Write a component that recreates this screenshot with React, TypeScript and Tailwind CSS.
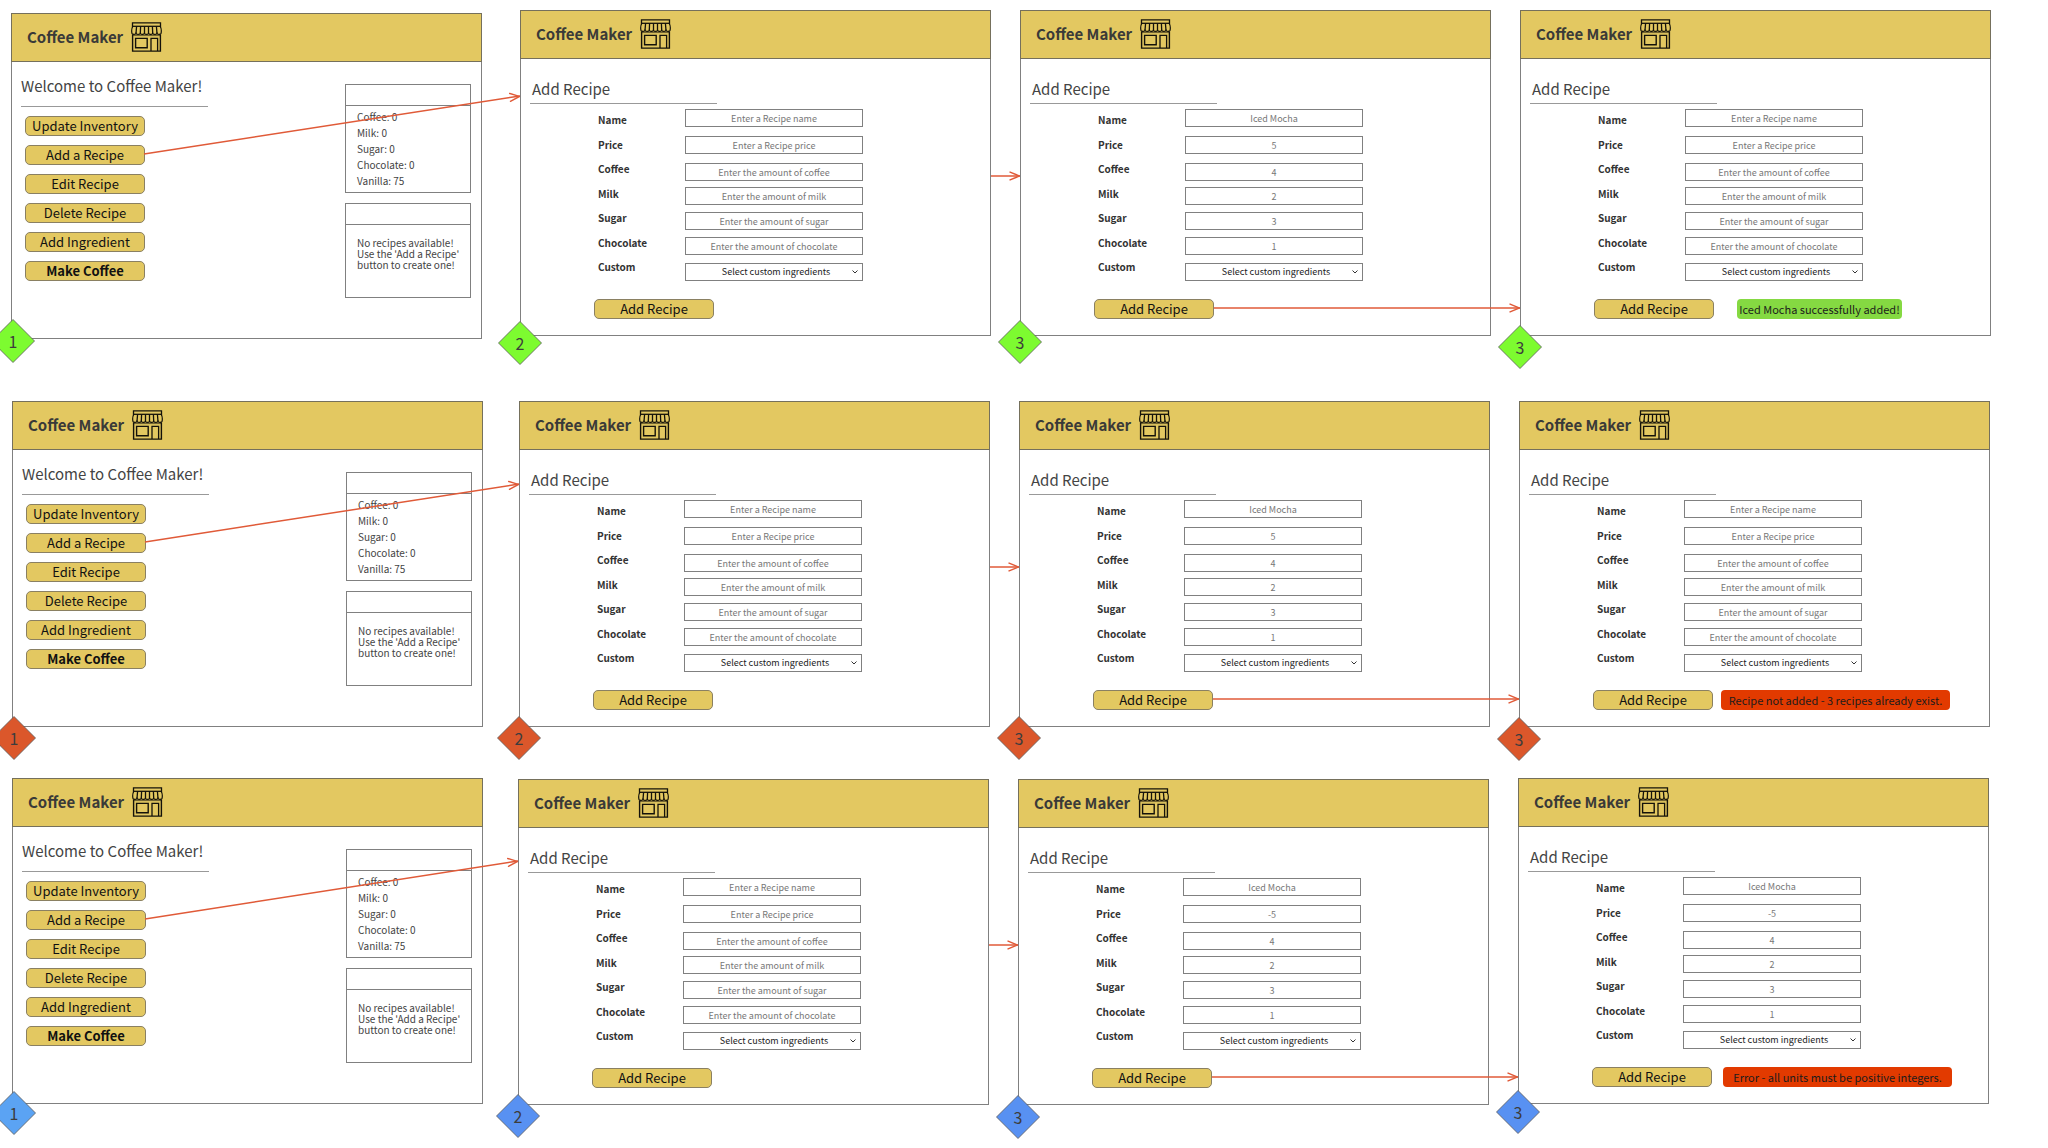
import { useId } from "react";
import type { ReactNode } from "react";

type Tone = "green" | "orange" | "sky" | "blue";

const toneFill: Record<Tone, string> = {
  green: "fill-[#7dfb30]",
  orange: "fill-[#db572b]",
  sky: "fill-[#5ba3f3]",
  blue: "fill-[#5891f2]",
};

const fieldNames = ["Name", "Price", "Coffee", "Milk", "Sugar", "Chocolate"];

const placeholders = [
  "Enter a Recipe name",
  "Enter a Recipe price",
  "Enter the amount of coffee",
  "Enter the amount of milk",
  "Enter the amount of sugar",
  "Enter the amount of chocolate",
];

const menu = ["Update Inventory", "Add a Recipe", "Edit Recipe", "Delete Recipe", "Add Ingredient"];

const stock = ["Coffee: 0", "Milk: 0", "Sugar: 0", "Chocolate: 0", "Vanilla: 75"];

function StoreIcon() {
  return (
    <svg viewBox="0 0 31 30" className="h-[30px] w-[31px] shrink-0" fill="none" stroke="#14120a" aria-hidden="true">
      <path d="M1.5 5V0.8h28V5" strokeWidth="1.3" />
      <path d="M1.5 4.3h28" strokeWidth="1.3" />
      <path
        d="M1.8 4.3C0.6 6.5 0.5 9 0.9 11.2c0.6 1.6 3.4 1.6 4.1 0 0.7 1.6 3.6 1.6 4.3 0 0.7 1.6 3.4 1.6 4.1 0 0.7 1.6 3.5 1.6 4.2 0 0.7 1.6 3.4 1.6 4.1 0 0.7 1.6 3.6 1.6 4.3 0 0.7 1.6 3.5 1.6 4.1 0 0.4-2.2 0.3-4.7-0.9-6.9"
        strokeWidth="1.2"
      />
      <path d="M5.6 4.3L5 11.4M9.6 4.3L9.3 11.4M13.5 4.3v7.1M17.5 4.3v7.1M21.4 4.3l0.3 7.1M25.4 4.3l0.6 7.1" strokeWidth="1.3" />
      <path d="M1.6 12.5v16.6h27.8V12.5" strokeWidth="1.4" />
      <path d="M1.6 13.6h27.8" strokeWidth="0.6" />
      <path d="M4.6 16.4h11.6v9.4H4.6z" strokeWidth="1.4" />
      <path d="M20 29V16.4h6.6V29" strokeWidth="1.3" />
    </svg>
  );
}

function ArrowHead({ className }: { className: string }) {
  return (
    <svg viewBox="0 0 12 10" className={`absolute h-[10px] w-[12px] ${className}`} fill="none" stroke="#e05a38" strokeWidth="1.4" aria-hidden="true">
      <path d="M1.5 0.8L11.5 5L1.5 9.2" />
    </svg>
  );
}

function RisingArrow({ reach }: { reach: string }) {
  return (
    <div className={`pointer-events-none absolute top-[83px] left-[133px] z-10 h-[58px] ${reach}`}>
      <svg className="h-full w-full overflow-visible" stroke="#e05a38" strokeWidth="1.5" aria-hidden="true">
        <line x1="0" y1="100%" x2="100%" y2="0" />
      </svg>
      <ArrowHead className="-top-1 right-0 -rotate-6" />
    </div>
  );
}

function FlatArrow({ place }: { place: string }) {
  return (
    <div className={`pointer-events-none absolute -right-[29px] z-10 h-[10px] ${place}`}>
      <svg className="block h-full w-full" stroke="#e05a38" strokeWidth="1.5" aria-hidden="true">
        <line x1="0" y1="50%" x2="100%" y2="50%" />
      </svg>
      <ArrowHead className="top-0 right-0" />
    </div>
  );
}

function StepBadge({ step, tone, place }: { step: number; tone: Tone; place: string }) {
  return (
    <div className={`absolute z-20 flex size-11 items-center justify-center ${place}`}>
      <svg viewBox="0 0 44 44" className="absolute inset-0" aria-hidden="true">
        <path d="M22 0.5L43.5 22L22 43.5L0.5 22Z" className={toneFill[tone]} stroke="#5c5c5c" strokeWidth="0.8" />
      </svg>
      <span className="relative text-[16px] leading-5 text-[#3d3d3d]">{step}</span>
    </div>
  );
}

function Frame({ children, overlay, className = "" }: { children: ReactNode; overlay: ReactNode; className?: string }) {
  return (
    <section className={`relative min-w-0 flex-1 ${className}`}>
      <header className="flex h-[49px] items-center gap-2 border border-[#75705c] bg-[#e3c861] pb-0.5 pl-[15px]">
        <h1 className="text-[15px] leading-6 font-bold text-[#3a3a38]">Coffee Maker</h1>
        <StoreIcon />
      </header>
      <div className="min-h-[277px] border-x border-b border-[#808080] bg-white">{children}</div>
      {overlay}
    </section>
  );
}

function GoldButton({ children, bold = false }: { children: ReactNode; bold?: boolean }) {
  return (
    <button
      type="button"
      className={`flex h-5 w-[120px] items-center justify-center rounded-[5px] border border-[#8a8062] bg-[#e3c861] text-[13px] leading-[18px] whitespace-nowrap text-[#111] ${bold ? "font-bold" : ""}`}
    >
      {children}
    </button>
  );
}

function HomeScreen({ tone, badge, reach, className }: { tone: Tone; badge: string; reach: string; className?: string }) {
  return (
    <Frame
      className={className}
      overlay={
        <>
          <RisingArrow reach={reach} />
          <StepBadge step={1} tone={tone} place={badge} />
        </>
      }
    >
      <div className="flex justify-between pr-[10px] pl-[9px]">
        <div>
          <h2 className="w-[187px] border-b border-[#999] pt-[10px] pb-[6px] text-[15px] leading-7 whitespace-nowrap text-[#444]">
            Welcome to Coffee Maker!
          </h2>
          <nav className="mt-[9px] ml-1 flex flex-col gap-[9px]">
            {menu.map((item) => (
              <GoldButton key={item}>{item}</GoldButton>
            ))}
            <GoldButton bold>Make Coffee</GoldButton>
          </nav>
        </div>
        <div className="flex w-[126px] flex-col gap-[10px] pt-[22px] text-[10px] text-[#444]">
          <div className="border border-[#808080]">
            <div className="h-[21px] border-b border-[#808080]" />
            <ul className="px-[11px] pt-[3px] pb-[3px] leading-4">
              {stock.map((line) => (
                <li key={line}>{line}</li>
              ))}
            </ul>
          </div>
          <div className="h-[95px] border border-[#808080]">
            <div className="h-[21px] border-b border-[#808080]" />
            <p className="pt-3 pl-[11px] leading-[11px] whitespace-nowrap">
              No recipes available!
              <br />
              Use the 'Add a Recipe'
              <br />
              button to create one!
            </p>
          </div>
        </div>
      </div>
    </Frame>
  );
}

function RecipeScreen({
  values,
  message,
  overlay,
  className,
}: {
  values?: string[];
  message?: ReactNode;
  overlay: ReactNode;
  className?: string;
}) {
  const id = useId();
  return (
    <Frame className={className} overlay={overlay}>
      <div className="pl-[9px]">
        <h2 className="w-[187px] border-b border-[#999] pt-4 pl-[2px] text-[15px] leading-7 text-[#444]">Add Recipe</h2>
      </div>
      <form className="pt-[5px]">
        <div className="ml-[77px] grid grid-cols-[87px_178px]">
          <div className="flex h-[168px] flex-col justify-between pt-px text-[10px] leading-5 font-bold text-[#333]">
            {fieldNames.map((name) => (
              <label key={name} htmlFor={`${id}-${name}`}>
                {name}
              </label>
            ))}
            <label htmlFor={`${id}-Custom`}>Custom</label>
          </div>
          <div className="grid grid-rows-[27px_27px_24px_25px_25px_26px_18px]">
            {fieldNames.map((name, i) => (
              <input
                key={name}
                id={`${id}-${name}`}
                type="text"
                placeholder={placeholders[i]}
                defaultValue={values ? values[i] : ""}
                className="h-[18px] w-full border border-[#808080] text-center text-[9px] text-[#777] placeholder:text-[#777]"
              />
            ))}
            <div className="relative">
              <select
                id={`${id}-Custom`}
                className="block h-[18px] w-full appearance-none border border-[#808080] bg-white pl-1 text-[9px] leading-4 text-[#222] [text-align-last:center]"
              >
                <option>Select custom ingredients</option>
              </select>
              <svg viewBox="0 0 6 4" className="pointer-events-none absolute top-[7px] right-[5px] h-1 w-1.5" fill="none" stroke="#333" aria-hidden="true">
                <path d="M0.5 0.5L3 3L5.5 0.5" />
              </svg>
            </div>
          </div>
        </div>
        <div className="mt-[18px] ml-[73px] flex items-center">
          <GoldButton>Add Recipe</GoldButton>
          {message}
        </div>
      </form>
    </Frame>
  );
}

function Notice({ children, className }: { children: ReactNode; className: string }) {
  return (
    <p role="status" className={`flex h-5 items-center justify-center rounded-[4px] text-[11px] leading-5 whitespace-nowrap text-[#1c1c1c] ${className}`}>
      {children}
    </p>
  );
}

const mocha = ["Iced Mocha", "5", "4", "2", "3", "1"];
const negativeMocha = ["Iced Mocha", "-5", "4", "2", "3", "1"];

export default function App() {
  return (
    <main className="min-h-screen overflow-hidden bg-white pt-[10px] font-['Noto_Sans_CJK_SC','Noto_Sans',sans-serif]">
      <div className="flex items-start gap-[29px] pr-[57px] pl-[11px]">
        <HomeScreen tone="green" badge="top-[306px] -left-5" reach="-right-[38px]" className="mt-[3px] mr-[9px]" />
        <RecipeScreen
          overlay={
            <>
              <FlatArrow place="left-full top-[161px]" />
              <StepBadge step={2} tone="green" place="top-[311px] -left-[22px]" />
            </>
          }
        />
        <RecipeScreen
          values={mocha}
          overlay={
            <>
              <FlatArrow place="left-[194px] top-[293px]" />
              <StepBadge step={3} tone="green" place="top-[310px] -left-[22px]" />
            </>
          }
        />
        <RecipeScreen
          message={<Notice className="ml-[23px] w-[165px] bg-[#85d942]">Iced Mocha successfully added!</Notice>}
          overlay={<StepBadge step={3} tone="green" place="top-[315px] -left-[22px]" />}
        />
      </div>

      <div className="mt-[62px] flex items-start gap-[29px] pr-[58px] pl-3">
        <HomeScreen tone="orange" badge="top-[315px] -left-5" reach="-right-[36px]" className="mr-[7px]" />
        <RecipeScreen
          overlay={
            <>
              <FlatArrow place="left-full top-[161px]" />
              <StepBadge step={2} tone="orange" place="top-[315px] -left-[22px]" />
            </>
          }
        />
        <RecipeScreen
          values={mocha}
          overlay={
            <>
              <FlatArrow place="left-[194px] top-[293px]" />
              <StepBadge step={3} tone="orange" place="top-[315px] -left-[22px]" />
            </>
          }
        />
        <RecipeScreen
          message={<Notice className="ml-2 w-[229px] bg-[#e23a00]">Recipe not added - 3 recipes already exist.</Notice>}
          overlay={<StepBadge step={3} tone="orange" place="top-[316px] -left-[22px]" />}
        />
      </div>

      <div className="mt-[51px] flex items-start gap-[29px] pr-[59px] pl-3">
        <HomeScreen tone="sky" badge="top-[313px] -left-5" reach="-right-[35px]" className="mr-[6px]" />
        <RecipeScreen
          className="mt-px"
          overlay={
            <>
              <FlatArrow place="left-full top-[161px]" />
              <StepBadge step={2} tone="blue" place="top-[315px] -left-[22px]" />
            </>
          }
        />
        <RecipeScreen
          className="mt-px"
          values={negativeMocha}
          overlay={
            <>
              <FlatArrow place="left-[194px] top-[293px]" />
              <StepBadge step={3} tone="blue" place="top-[316px] -left-[22px]" />
            </>
          }
        />
        <RecipeScreen
          values={negativeMocha}
          message={<Notice className="ml-[11px] w-[229px] bg-[#e23a00]">Error - all units must be positive integers.</Notice>}
          overlay={<StepBadge step={3} tone="blue" place="top-[312px] -left-[22px]" />}
        />
      </div>
    </main>
  );
}
